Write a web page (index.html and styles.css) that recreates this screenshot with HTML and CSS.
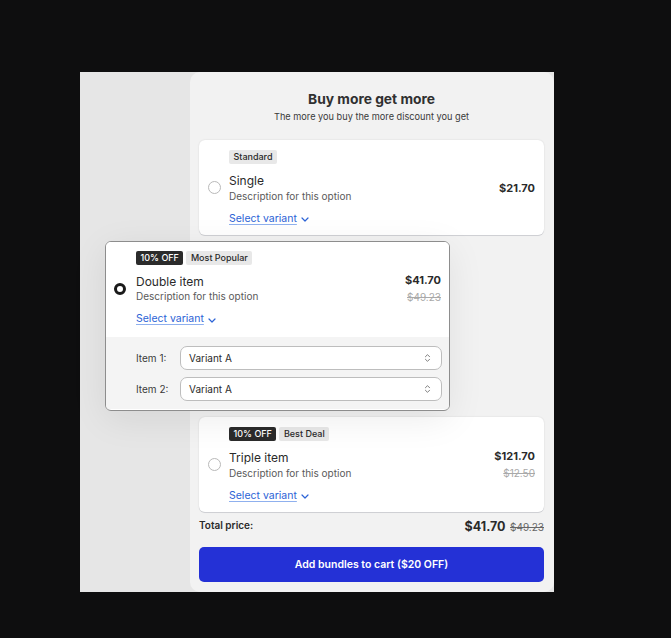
FILE: index.html
```html
<!DOCTYPE html>
<html>
<head>
<meta charset="utf-8">
<link rel="stylesheet" href="styles.css">
</head>
<body>
<div class="stage">
  <div class="spacer"></div>
  <div class="panel">
    <div class="head">
      <h1 class="title">Buy more get more</h1>
      <p class="subtitle">The more you buy the more discount you get</p>
    </div>

    <div class="card">
      <div class="badges"><span class="badge">Standard</span></div>
      <span class="radio"></span>
      <div class="info">
        <div class="name">Single</div>
        <div class="desc">Description for this option</div>
      </div>
      <div class="price"><div class="now">$21.70</div></div>
      <a class="variant">Select variant <svg class="chev" viewBox="0 0 8 5" width="8" height="5"><path d="M1 1l3 3 3-3" fill="none" stroke="currentColor" stroke-width="1.2" stroke-linecap="round" stroke-linejoin="round"/></svg></a>
    </div>

    <div class="card selected">
      <div class="card-main">
        <div class="badges"><span class="badge dark">10% OFF</span><span class="badge">Most Popular</span></div>
        <span class="radio on"></span>
        <div class="info">
          <div class="name">Double item</div>
          <div class="desc">Description for this option</div>
        </div>
        <div class="price"><div class="now">$41.70</div><div class="was">$49.23</div></div>
        <a class="variant">Select variant <svg class="chev" viewBox="0 0 8 5" width="8" height="5"><path d="M1 1l3 3 3-3" fill="none" stroke="currentColor" stroke-width="1.2" stroke-linecap="round" stroke-linejoin="round"/></svg></a>
      </div>
      <div class="variants">
        <div class="vrow">
          <span class="vlabel">Item 1:</span>
          <div class="select"><span>Variant A</span><svg viewBox="0 0 8 12" width="7" height="10"><path d="M1.5 4.5L4 2l2.5 2.5M1.5 7.5L4 10l2.5-2.5" fill="none" stroke="#666" stroke-width="1" stroke-linecap="round" stroke-linejoin="round"/></svg></div>
        </div>
        <div class="vrow">
          <span class="vlabel">Item 2:</span>
          <div class="select"><span>Variant A</span><svg viewBox="0 0 8 12" width="7" height="10"><path d="M1.5 4.5L4 2l2.5 2.5M1.5 7.5L4 10l2.5-2.5" fill="none" stroke="#666" stroke-width="1" stroke-linecap="round" stroke-linejoin="round"/></svg></div>
        </div>
      </div>
    </div>

    <div class="card">
      <div class="badges"><span class="badge dark">10% OFF</span><span class="badge">Best Deal</span></div>
      <span class="radio"></span>
      <div class="info">
        <div class="name">Triple item</div>
        <div class="desc">Description for this option</div>
      </div>
      <div class="price"><div class="now">$121.70</div><div class="was">$12.50</div></div>
      <a class="variant">Select variant <svg class="chev" viewBox="0 0 8 5" width="8" height="5"><path d="M1 1l3 3 3-3" fill="none" stroke="currentColor" stroke-width="1.2" stroke-linecap="round" stroke-linejoin="round"/></svg></a>
    </div>

    <div class="total">
      <span class="tlabel">Total price:</span>
      <span class="tprice"><b>$41.70</b> <s>$49.23</s></span>
    </div>

    <button class="cta">Add bundles to cart ($20 OFF)</button>
  </div>
</div>
</body>
</html>
```
FILE: styles.css
```css
* { box-sizing: border-box; }
html, body { margin: 0; padding: 0; }
body {
  background: #0e0e0f;
  font-family: Inter, "Noto Sans", sans-serif;
  color: #303030;
  width: 671px;
  height: 638px;
  overflow: hidden;
}
.stage {
  margin: 72px 0 0 80px;
  width: 474px;
  height: 520px;
  background: #e6e6e6;
  display: flex;
}
.spacer { width: 110px; flex: none; }
.panel {
  width: 364px;
  height: 520px;
  background: #f2f2f2;
  border-radius: 10px;
  padding: 0 10px 0 9px;
  display: flex;
  flex-direction: column;
}
.head {
  text-align: center;
  padding-top: 18px;
  height: 68px;
}
.title {
  margin: 0;
  font-size: 13.8px;
  font-weight: 700;
  line-height: 18px;
  color: #303030;
}
.subtitle {
  margin: 2px 0 0;
  font-size: 9.2px;
  line-height: 14px;
  color: #3a3a3a;
}
.card, .card-main {
  display: grid;
  grid-template-columns: 13px 1fr auto;
  column-gap: 8px;
  align-items: center;
}
.card {
  background: #fff;
  border-radius: 6px;
  padding: 9px 9px 8px 9px;
  height: 95px;
  box-shadow: 0 1px 0 #cfd0d4, 0 0 2px rgba(0,0,0,0.12);
  margin-bottom: 6px;
}
.badges {
  grid-column: 2;
  display: flex;
  gap: 3px;
  margin-bottom: 6px;
}
.badge {
  display: inline-block;
  font-size: 9px;
  font-weight: 500;
  line-height: 14px;
  height: 14px;
  padding: 0 4.5px;
  border-radius: 2px;
  background: #e8e8e8;
  color: #2a2a2a;
}
.badge.dark {
  background: #2b2b2b;
  color: #fff;
}
.radio {
  grid-column: 1;
  width: 13px;
  height: 13px;
  border-radius: 50%;
  border: 1px solid #b9b9b9;
  background: #fff;
}
.radio.on {
  border: 3.5px solid #1a1a1a;
  width: 12px;
  height: 12px;
}
.info { grid-column: 2; }
.name {
  font-size: 12px;
  line-height: 16px;
  color: #2a2a2a;
}
.desc {
  font-size: 10px;
  line-height: 14px;
  color: #5a5a5a;
  margin-top: -0.5px;
}
.price {
  grid-column: 3;
  text-align: right;
}
.now {
  font-size: 11px;
  font-weight: 700;
  line-height: 14px;
  color: #2a2a2a;
}
.was {
  font-size: 10px;
  line-height: 14px;
  color: #a9a9a9;
  text-decoration: line-through;
  margin-top: 3px;
}
.variant {
  grid-column: 2;
  justify-self: start;
  margin-top: 6px;
  font-size: 10.5px;
  line-height: 14px;
  color: #2c63d6;
  text-decoration: underline;
  text-decoration-color: #8fb0ee;
  text-underline-offset: 2px;
  display: inline-flex;
  align-items: center;
  gap: 4px;
}
.variant .chev { margin-top: 2px; }

.card.selected {
  display: block;
  padding: 0;
  height: 170px;
  transform: translateX(-94px);
  border: 1px solid #8d8d8d;
  box-shadow: 0 8px 36px rgba(0,0,0,0.08);
  overflow: hidden;
  margin-bottom: 6px;
}
.card-main {
  background: #fff;
  padding: 8px 8px 10px 8px;
  height: 95px;
  column-gap: 9px;
}
.variants {
  background: #f4f4f4;
  padding: 9px 7px 8px 30px;
  display: flex;
  flex-direction: column;
  gap: 7px;
}
.vrow {
  display: flex;
  align-items: center;
}
.vlabel {
  width: 44px;
  font-size: 10px;
  color: #3a3a3a;
}
.select {
  flex: 1;
  height: 24px;
  background: #fff;
  border: 1px solid #bdbdbd;
  border-radius: 7px;
  display: flex;
  align-items: center;
  justify-content: space-between;
  padding: 0 10px 0 8px;
  font-size: 10px;
  color: #2a2a2a;
}

.total {
  display: flex;
  justify-content: space-between;
  align-items: center;
  height: 14px;
  margin-top: 0;
}
.tlabel {
  font-size: 10px;
  font-weight: 600;
  color: #2a2a2a;
}
.tprice b {
  font-size: 12.5px;
  font-weight: 700;
  color: #2a2a2a;
}
.tprice s {
  font-size: 10px;
  color: #666;
}
.cta {
  margin-top: 15px;
  height: 35px;
  width: 100%;
  border: none;
  border-radius: 5px;
  background: #2431d6;
  color: #fff;
  font-family: Inter, "Noto Sans", sans-serif;
  font-size: 10.5px;
  font-weight: 600;
}
```
